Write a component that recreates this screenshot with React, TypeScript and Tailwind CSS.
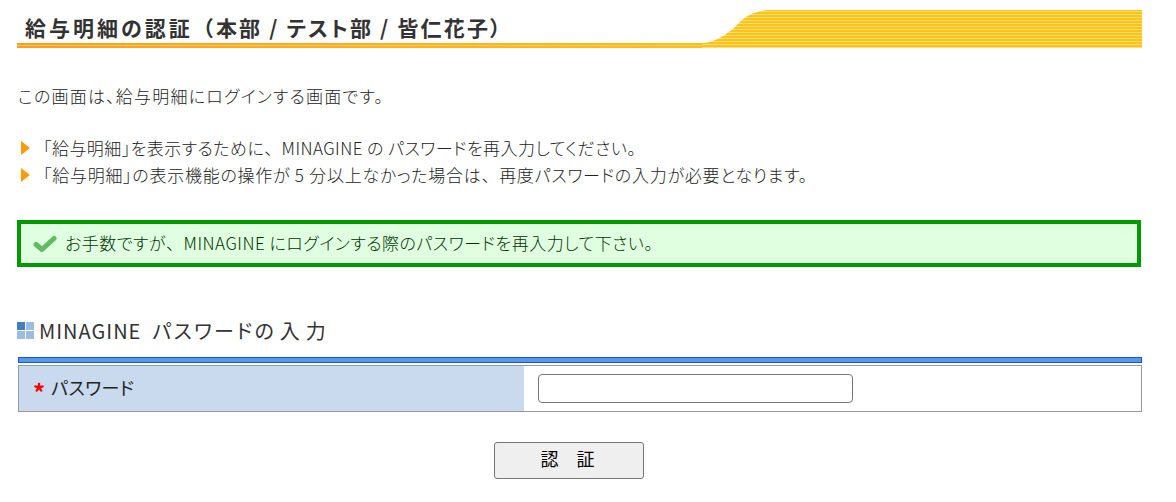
const JP = 'font-["Noto_Sans_CJK_JP","Noto_Sans",sans-serif]';

function HeaderBand() {
  return (
    <svg width="440" height="38" viewBox="0 0 440 38" className="absolute right-0 top-0" aria-hidden="true">
      <defs>
        <pattern id="stripes" width="3" height="3" patternUnits="userSpaceOnUse">
          <rect width="3" height="3" fill="#fdc31c" />
          <rect y="1" width="3" height="1" fill="#ffdf6a" />
        </pattern>
      </defs>
      <path d="M0 33 C12 33 22 26 32 18 C40 10 46 2 66 0 H440 V38 H0 Z" fill="url(#stripes)" />
    </svg>
  );
}

function Bullet() {
  return (
    <svg width="9" height="14" viewBox="0 0 9 14" className="mt-[5px] shrink-0" aria-hidden="true">
      <path d="M0 0 L9 7 L0 14 Z" fill="#ff9a0a" />
    </svg>
  );
}

function CheckIcon() {
  return (
    <svg width="24" height="18" viewBox="0 0 24 18" className="shrink-0" aria-hidden="true">
      <polyline points="3,9.5 9,14.5 21,3.5" fill="none" stroke="#62bb62" strokeWidth="5" strokeLinecap="round" strokeLinejoin="round" />
    </svg>
  );
}

function SquaresIcon() {
  return (
    <svg width="18" height="18" viewBox="0 0 18 18" className="shrink-0" aria-hidden="true">
      <rect x="0" y="0" width="8" height="8" fill="#3f7fc1" />
      <rect x="9" y="0" width="8" height="8" fill="#9dbde0" />
      <rect x="0" y="9" width="8" height="8" fill="#9dbde0" />
      <rect x="9" y="9" width="8" height="8" fill="#9dbde0" />
    </svg>
  );
}

// full-width comma, the rest of the line stays proportional
function Ten() {
  return <span className="[font-feature-settings:normal]">、</span>;
}

export default function App() {
  return (
    <div className={`${JP} min-h-[502px] bg-white pt-[10px] pr-[34px] pl-[17px] text-[17px] font-light text-[#222] [font-feature-settings:"palt"]`}>
      <div className="relative h-[38px]">
        <div className="absolute inset-x-0 bottom-0 flex h-[5px] items-center bg-gradient-to-r from-[#ff9d1e] to-[#fdc014] to-60%">
          <div className="h-px w-full bg-[#ffc860]" />
        </div>
        <HeaderBand />
        <h1 className="relative pl-[8px] text-[21px] leading-[34px] font-bold tracking-[2.2px] text-[#333]">
          <span className="tracking-[3px]">給与明細の認証</span>
          <span className="[font-feature-settings:normal]">（</span>
          本部 / テスト部 / 皆仁花子）
        </h1>
      </div>

      <p className="mt-[36px] ml-px leading-[24px] tracking-[1.2px]">この画面は、給与明細にログインする画面です。</p>

      <ul className="mt-[28px] flex flex-col gap-[3px] pl-[4px]">
        <li className="flex h-[24px] gap-[13px] leading-[24px]">
          <Bullet />
          <span className="tracking-[0.45px]">「給与明細」を表示するために<Ten />MINAGINE の パスワードを再入力してください。</span>
        </li>
        <li className="flex h-[24px] gap-[13px] leading-[24px]">
          <Bullet />
          <span className="tracking-[0.73px]">「給与明細」の表示機能の操作が 5 分以上なかった場合は<Ten />再度パスワードの入力が必要となります。</span>
        </li>
      </ul>

      <div className="mt-[33px] flex h-[47px] w-[1124px] items-center gap-[8px] border-4 border-[#009900] bg-[#e0ffe0] pl-[12px] text-[#003300]">
        <CheckIcon />
        <span className="mb-[2px] tracking-[0.5px]">お手数ですが<Ten />MINAGINE にログインする際のパスワードを再入力して下さい。</span>
      </div>

      <h2 className="mt-[51px] flex h-[26px] items-center gap-[4px] text-[20px] font-normal tracking-[1px] text-[#333]">
        <SquaresIcon />
        <span>MINAGINE</span>
        <span className="ml-[7px] tracking-[2.4px]">パスワード</span>
        <span className="-ml-[4px] tracking-[6px]">の入力</span>
      </h2>

      <div className="mt-[13px] ml-px flex w-[1124px] flex-col">
        <div className="h-[6px] border border-[#0a5be0] bg-[#5a96f0]" />
        <div className="mt-[2px] flex h-[47px] border border-[#999]">
          <div className="flex w-[505px] items-center gap-[6px] bg-[#c9d9ee] pl-[14px] text-[18px] font-normal">
            <span className="mt-[6px] text-[24px] leading-none font-bold text-[#f00]">*</span>
            <span className="mb-[3px] tracking-[0.4px]">パスワード</span>
          </div>
          <div className="flex items-center pl-[14px]">
            <input type="password" className="h-[29px] w-[315px] rounded-[4px] border border-[#767676] bg-white" />
          </div>
        </div>
      </div>

      <div className="mt-[30px] flex w-[1104px] justify-center">
        <button className="h-[37px] w-[150px] rounded-[3px] border border-[#767676] bg-[#efefef] pr-[3px] pb-[5px] text-[18px] font-normal text-black">
          認　証
        </button>
      </div>
    </div>
  );
}
